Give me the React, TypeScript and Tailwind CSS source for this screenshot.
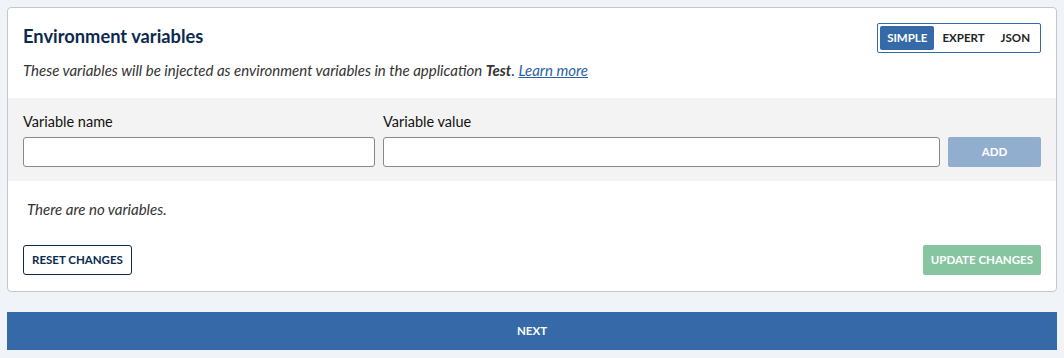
import { useState } from 'react'

const font = { fontFamily: 'Lato, "Noto Sans", sans-serif' }

export default function App() {
  const [mode, setMode] = useState('SIMPLE')
  const [name, setName] = useState('')
  const [value, setValue] = useState('')

  return (
    <div className="min-h-screen bg-[#f0f3f8] px-[7px] pt-[7px]" style={font}>
      {/* card */}
      <div className="bg-white border border-[#c4c7cc] rounded-[4px]">
        <div className="flex justify-between px-[15px] pt-[15px] pb-[17px]">
          <div>
            <h2 className="text-[18.3px] font-bold text-[#0c2a4d] leading-[24px] mt-[1px]">Environment variables</h2>
            <p className="text-[15px] italic text-[#333] mt-[12px] leading-[21px]">
              These variables will be injected as environment variables in the application <b>Test</b>.{' '}
              <a href="#" className="text-[#2b62a6] underline">Learn more</a>
            </p>
          </div>
          <div className="flex h-[30px] border border-[#3669a8] rounded-[2px] p-[2px] text-[11.5px] font-bold">
            {['SIMPLE', 'EXPERT', 'JSON'].map(m => (
              <button
                key={m}
                onClick={() => setMode(m)}
                className={mode === m ? 'bg-[#3669a8] text-white px-[7px] rounded-[2px]' : 'text-[#222] px-[8px]'}
              >
                {m}
              </button>
            ))}
          </div>
        </div>

        {/* add row */}
        <div className="bg-[#f3f3f3] px-[15px] pt-[15px] pb-[14px]">
          <div className="flex gap-[8px] items-end">
            <div className="w-[352px]">
              <label className="block text-[14.5px] text-[#111] mb-[6px] leading-[18px]">Variable name</label>
              <input
                value={name}
                onChange={e => setName(e.target.value)}
                className="w-full h-[30px] bg-white border border-[#888] rounded-[3px] px-2 text-[14px]"
              />
            </div>
            <div className="flex-1">
              <label className="block text-[14.5px] text-[#111] mb-[6px] leading-[18px]">Variable value</label>
              <input
                value={value}
                onChange={e => setValue(e.target.value)}
                className="w-full h-[30px] bg-white border border-[#888] rounded-[3px] px-2 text-[14px]"
              />
            </div>
            <button className="w-[93px] h-[30px] bg-[#92aecf] text-white text-[11.5px] font-bold rounded-[2px]">ADD</button>
          </div>
        </div>

        <p className="px-[19px] pt-[18px] text-[15px] italic text-[#333] leading-[21px]">There are no variables.</p>

        <div className="flex justify-between px-[15px] pt-[25px] pb-[16px]">
          <button className="h-[30px] px-[8px] border border-[#0c2a4d] rounded-[3px] text-[11.5px] font-bold text-[#0c2a4d]">
            RESET CHANGES
          </button>
          <button className="h-[30px] px-[8px] bg-[#86c5a0] rounded-[2px] text-[11.5px] font-bold text-white">
            UPDATE CHANGES
          </button>
        </div>
      </div>

      <button className="w-full h-[38px] mt-[20px] bg-[#3669a8] text-white text-[11.5px] font-bold">NEXT</button>
    </div>
  )
}
